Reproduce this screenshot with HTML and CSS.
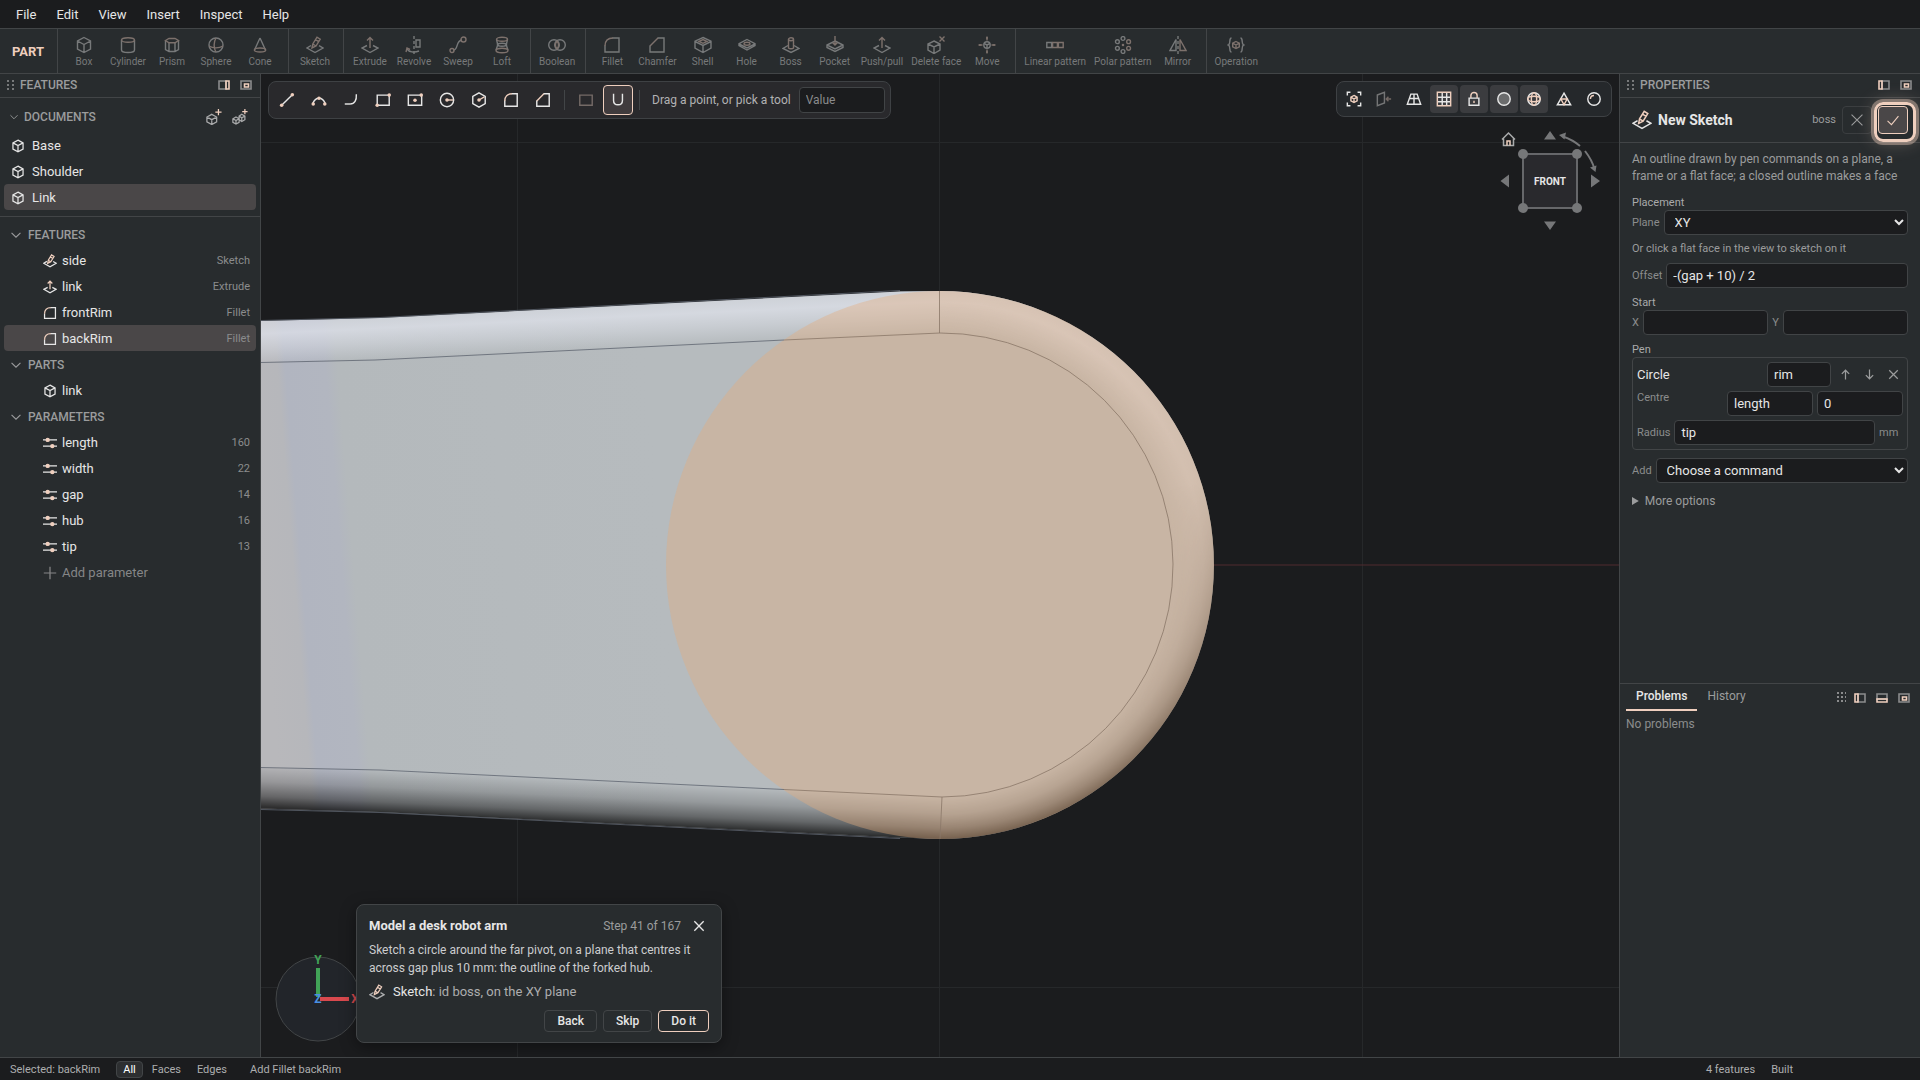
FILE: index.html
```html
<!DOCTYPE html>
<html lang="en">
<head>
<meta charset="utf-8">
<title>Model a desk robot arm</title>
<link rel="stylesheet" href="styles.css">
</head>
<body>
<svg class="defs" aria-hidden="true">
  <symbol id="box" viewBox="0 0 18 18"><path d="M9 1.5 15.5 5v8L9 16.5 2.5 13V5zM2.5 5 9 8.500 15.500 5M9 8.500v8"/></symbol>
  <symbol id="cylinder" viewBox="0 0 18 18"><path d="M2.500 4v10c0 1.400 3 2.500 6.500 2.500s6.500-1.100 6.500-2.500V4"/><ellipse class="a" cx="9" cy="4" rx="6.500" ry="2.300"/></symbol>
  <symbol id="prism" viewBox="0 0 18 18"><path d="M2.500 5v8.500l3.500 2h6l3.500-2V5M6 7v8M12 7v8"/><path class="a" d="M2.500 4.500 6 2.500h6l3.500 2L12 6.800H6z"/></symbol>
  <symbol id="sphere" viewBox="0 0 18 18"><circle cx="9" cy="9" r="7"/><path class="a" d="M9 2c-2.500 4-2.500 10 0 14M2 10c4 2.500 10 2.500 14 0"/></symbol>
  <symbol id="cone" viewBox="0 0 18 18"><path d="M9 2 3.500 14M9 2l5.500 12"/><ellipse class="a" cx="9" cy="14" rx="5.700" ry="2"/></symbol>
  <symbol id="sketch" viewBox="0 0 18 18"><path d="M5 9.500 1 12l8 4.500 8-4.500-4-2.300"/><path class="a" d="m6 12 .8-4L11 1.200l3.200 2L10 10zM6.800 8l3.200 2M9.500 3.700l3.200 2"/></symbol>
  <symbol id="extrude" viewBox="0 0 18 18"><path d="M6 9.500 1 12l8 4.500 8-4.500-5-2.500"/><path class="a" d="M9 12V1.500M6 4.500l3-3 3 3"/></symbol>
  <symbol id="revolve" viewBox="0 0 18 18"><path d="M9 0v18" stroke-dasharray="3 2"/><path d="M11 4h4v7h-4zM14 15c-5 2-10 1-12-2"/><path class="a" d="m1 16 1-4 3 1.500"/></symbol>
  <symbol id="sweep" viewBox="0 0 18 18"><path d="M4 14c6 0 2-9 9-10"/><circle class="a" cx="3" cy="14.500" r="2"/><circle class="a" cx="14.500" cy="3.500" r="2.500"/></symbol>
  <symbol id="loft" viewBox="0 0 18 18"><path d="M3.500 3.500C5 9 5 9 3 14M14.500 3.500C13 9 13 9 15 14"/><ellipse class="a" cx="9" cy="3.200" rx="5.500" ry="2"/><ellipse class="a" cx="9" cy="14.500" rx="6" ry="2.300"/><ellipse cx="9" cy="8.800" rx="4.200" ry="1.500"/></symbol>
  <symbol id="boolean" viewBox="0 0 18 18"><circle cx="6" cy="9" r="5.300"/><circle cx="12" cy="9" r="5.300"/><path class="a" d="M9 5c-2 2.500-2 5.500 0 8 2-2.500 2-5.500 0-8z"/></symbol>
  <symbol id="fillet" viewBox="0 0 18 18"><path d="M9.500 2H16v14H2V9.500"/><path class="a" d="M2 10c0-5 3-8 8-8"/></symbol>
  <symbol id="chamfer" viewBox="0 0 18 18"><path d="M9.500 2H16v14H2V9.500"/><path class="a" d="m2 10 8-8"/></symbol>
  <symbol id="shell" viewBox="0 0 18 18"><path d="m9 1.500 8 3.700v7L9 16.500l-8-4.300v-7zM1 5.500 9 9.500l8-4M9 9.500v7"/><path class="a" d="m5 5.500 4-2 4 2-4 1.800z"/></symbol>
  <symbol id="hole" viewBox="0 0 18 18"><path d="m9 3.500 8 4.200v2L9 14 1 9.700v-2zM1 8l8 4 8-4"/><ellipse class="a" cx="9" cy="7.700" rx="3" ry="1.500"/></symbol>
  <symbol id="boss" viewBox="0 0 18 18"><path d="m6 9.500-5 3L9 16.500l8-4-5-3"/><path class="a" d="M6.500 3.500V12c1 1 4 1 5 0V3.500"/><ellipse class="a" cx="9" cy="3.300" rx="2.500" ry="1.500"/></symbol>
  <symbol id="pocket" viewBox="0 0 18 18"><path d="m9 5 8 4v2.500l-8 4-8-4V9zM1 9l8 4 8-4"/><path class="a" d="M9 0v9M6.500 6.500 9 9l2.500-2.500"/></symbol>
  <symbol id="delface" viewBox="0 0 18 18"><path d="m7 5 6 3v6l-6 3.500-6-3.500V8zM1 8l6 3 6-3M7 11v6.500"/><path class="a" d="m12.500.5 5 5M17.500.5l-5 5"/></symbol>
  <symbol id="move" viewBox="0 0 18 18"><circle cx="9" cy="9" r="3.200"/><path d="M6 7.500 9 9l3-1.500M9 9v3.200"/><path class="a" d="M9 .5v4M9 13.500v4M.5 9h4M13.500 9h4M8 2h2M8 16h2M2 8v2M16 8v2"/></symbol>
  <symbol id="linear" viewBox="0 0 18 18"><path d="M.8 6.500h4.800v5H.8z"/><path class="a" d="M6.600 6.500h4.800v5H6.600zM12.400 6.500h4.800v5h-4.800z"/></symbol>
  <symbol id="polar" viewBox="0 0 18 18"><circle class="a" cx="9" cy="9" r=".6"/><circle cx="9" cy="2.500" r="1.900"/><circle class="a" cx="14.600" cy="5.700" r="1.900"/><circle class="a" cx="14.600" cy="12.300" r="1.900"/><circle cx="9" cy="15.500" r="1.900"/><circle cx="3.400" cy="12.300" r="1.900"/><circle cx="3.400" cy="5.700" r="1.900"/></symbol>
  <symbol id="mirror" viewBox="0 0 18 18"><path d="M9 0v18" stroke-dasharray="3 2"/><path d="M7 3.500v11H1z"/><path class="a" d="M11 3.500v11h6z"/></symbol>
  <symbol id="operation" viewBox="0 0 18 18"><path d="M4.500 2C1.500 2 4 8 1.500 9 4 10 1.500 16 4.500 16M13.500 2c3 0 .5 6 3 7-2.500 1 0 7-3 7"/><path class="a" d="m9 5.500 3.300 1.700v3.600L9 12.500l-3.300-1.700V7.200zM5.700 7.200 9 9l3.300-1.800M9 9v3.500"/></symbol>

  <symbol id="line" viewBox="0 0 18 18"><path d="M3 15 15 3"/><circle class="f" cx="3" cy="15" r="2"/><circle class="f" cx="15" cy="3" r="2"/></symbol>
  <symbol id="arc" viewBox="0 0 18 18"><path d="M2 13c3-8 11-8 14 0"/><circle class="f" cx="2.500" cy="13.500" r="2"/><circle class="f" cx="15.500" cy="13.500" r="2"/><circle class="f" cx="9" cy="7" r="2"/></symbol>
  <symbol id="tangent" viewBox="0 0 18 18"><path d="M2 13.500h6"/><path d="M8 13.500c5 0 7.500-4 7-11"/></symbol>
  <symbol id="rect" viewBox="0 0 18 18"><path d="M2.500 3.500h13.500v11.500h-13.500z"/><circle class="f" cx="2.500" cy="15" r="2"/><circle class="f" cx="16" cy="3.500" r="2"/></symbol>
  <symbol id="crect" viewBox="0 0 18 18"><path d="M1.500 3.500h15v11.500h-15z"/><circle class="f" cx="9" cy="9.200" r="2"/><circle class="f" cx="16" cy="3.500" r="2"/></symbol>
  <symbol id="circ" viewBox="0 0 18 18"><circle cx="9" cy="9" r="7.500"/><circle class="f" cx="9" cy="9" r="2"/><path class="a" d="M9 9h7"/></symbol>
  <symbol id="hex" viewBox="0 0 18 18"><path d="m9 1 7 4v8l-7 4-7-4V5z"/><circle class="f" cx="9" cy="9" r="2"/><path class="a" d="m9 9 6-3.500"/></symbol>
  <symbol id="cons" viewBox="0 0 18 18"><path class="a" d="M2 3.500h14v11.500h-14z"/></symbol>
  <symbol id="magnet" viewBox="0 0 18 18"><path d="M4 2v7.500c0 6.500 10 6.500 10 0V2"/></symbol>

  <symbol id="fit" viewBox="0 0 18 18"><path d="M1.500 5V1.500H5M13 1.500h3.500V5M16.500 13v3.500H13M5 16.500H1.500V13"/><path class="a" d="m9 5 3.500 2v4L9 13l-3.500-2V7zM5.500 7 9 9l3.500-2M9 9v4"/></symbol>
  <symbol id="section" viewBox="0 0 18 18"><path d="m1.500 4.500 8-3v12l-8 3z"/><path class="a" d="M17 9h-5M14 6.500 11.500 9l2.500 2.500"/></symbol>
  <symbol id="persp" viewBox="0 0 18 18"><path d="M5.500 3.500h7l4 11.500h-15zM4 8.500h10M9 3.500V15"/></symbol>
  <symbol id="grid" viewBox="0 0 18 18"><path d="M2 7h14M2 12h14M7 2v14M12 2v14"/><path class="a" d="M1.500 1.500h15v15h-15z"/></symbol>
  <symbol id="lock" viewBox="0 0 18 18"><path d="M3.500 8h11v8h-11z"/><path class="a" d="M5.500 8V5c0-4.500 7-4.500 7 0v3M9 11v2.500"/></symbol>
  <symbol id="shade" viewBox="0 0 18 18"><circle class="dim" cx="9" cy="9" r="7"/></symbol>
  <symbol id="wire" viewBox="0 0 18 18"><circle cx="9" cy="9" r="7"/><g class="a"><ellipse cx="9" cy="9" rx="3" ry="7"/><ellipse cx="9" cy="9" rx="7" ry="3"/></g></symbol>
  <symbol id="mesh" viewBox="0 0 18 18"><path d="m9 2.500 7.500 13h-15z"/><path class="a" d="M5.500 9h7L9 15.500z"/></symbol>
  <symbol id="matte" viewBox="0 0 18 18"><circle cx="9" cy="9" r="7"/><path class="a" d="M5 9c0-2.500 1.500-4 4-4"/></symbol>

  <symbol id="sliders" viewBox="0 0 18 18"><path d="M0 5h18M0 13h18"/><circle class="f" cx="6" cy="5" r="2.800"/><circle class="f" cx="12" cy="13" r="2.800"/></symbol>
  <symbol id="plus" viewBox="0 0 18 18"><path d="M9 1v16M1 9h16"/></symbol>
  <symbol id="chev" viewBox="0 0 18 18"><path d="m1 5 8 8 8-8"/></symbol>
  <symbol id="x" viewBox="0 0 18 18"><path d="m2 2 14 14M16 2 2 16"/></symbol>
  <symbol id="check" viewBox="0 0 18 18"><path d="m2 10 5 5L16 4"/></symbol>
  <symbol id="up" viewBox="0 0 18 18"><path d="M9 17V2M3 8l6-6 6 6"/></symbol>
  <symbol id="down" viewBox="0 0 18 18"><path d="M9 1v15M3 10l6 6 6-6"/></symbol>
  <symbol id="newpart" viewBox="0 0 18 18"><path d="m6.500 6 5.500 3v5.500l-5.500 3-5.500-3V9zM1 9l5.500 3L12 9M6.500 12v5.500"/><path class="a" d="M14 0v7M10.500 3.500h7"/></symbol>
  <symbol id="newasm" viewBox="0 0 18 18"><path d="m4.500 9 3.500 2v4l-3.500 2L1 15v-4zM1 11l3.500 2L8 11M4.500 13v4M11 6l3.500 2v4L11 14l-3-2V8zM8 8l3 2 3.500-2M11 10v4"/><path class="a" d="M14.500 0v6M11.500 3h6"/></symbol>
  <symbol id="dockr" viewBox="0 0 12 10"><path d="M1 1h7v8H1z"/><path class="a" d="M8 1h3v8H8z"/></symbol>
  <symbol id="dockl" viewBox="0 0 12 10"><path d="M4 1h7v8H4z"/><path class="a" d="M1 1h3v8H1z"/></symbol>
  <symbol id="dockb" viewBox="0 0 12 10"><path d="M1 1h10v5H1z"/><path class="a" d="M1 6h10v3H1z"/></symbol>
  <symbol id="float" viewBox="0 0 12 10"><path d="M1 1h10v8H1z"/><path class="a" d="M4.500 4h4v3h-4z"/></symbol>
  <symbol id="grip" viewBox="0 0 8 12"><path class="g" d="M0 1h2v2H0zM5 1h2v2H5zM0 5h2v2H0zM5 5h2v2H5zM0 9h2v2H0zM5 9h2v2H5z"/></symbol>
</svg>

<header>
  <nav class="menubar">
    <button>File</button><button>Edit</button><button>View</button><button>Insert</button><button>Inspect</button><button>Help</button>
  </nav>
  <div class="ribbon">
    <strong class="mode">PART</strong>
    <div class="group">
      <button disabled><svg><use href="#box"/></svg>Box</button>
      <button disabled><svg><use href="#cylinder"/></svg>Cylinder</button>
      <button disabled><svg><use href="#prism"/></svg>Prism</button>
      <button disabled><svg><use href="#sphere"/></svg>Sphere</button>
      <button disabled><svg><use href="#cone"/></svg>Cone</button>
    </div>
    <div class="group"><button disabled><svg><use href="#sketch"/></svg>Sketch</button></div>
    <div class="group">
      <button disabled><svg><use href="#extrude"/></svg>Extrude</button>
      <button disabled><svg><use href="#revolve"/></svg>Revolve</button>
      <button disabled><svg><use href="#sweep"/></svg>Sweep</button>
      <button disabled><svg><use href="#loft"/></svg>Loft</button>
    </div>
    <div class="group"><button disabled><svg><use href="#boolean"/></svg>Boolean</button></div>
    <div class="group">
      <button disabled><svg><use href="#fillet"/></svg>Fillet</button>
      <button disabled><svg><use href="#chamfer"/></svg>Chamfer</button>
      <button disabled><svg><use href="#shell"/></svg>Shell</button>
      <button disabled><svg><use href="#hole"/></svg>Hole</button>
      <button disabled><svg><use href="#boss"/></svg>Boss</button>
      <button disabled><svg><use href="#pocket"/></svg>Pocket</button>
      <button disabled><svg><use href="#extrude"/></svg>Push/pull</button>
      <button disabled><svg><use href="#delface"/></svg>Delete face</button>
      <button disabled><svg><use href="#move"/></svg>Move</button>
    </div>
    <div class="group">
      <button disabled><svg><use href="#linear"/></svg>Linear pattern</button>
      <button disabled><svg><use href="#polar"/></svg>Polar pattern</button>
      <button disabled><svg><use href="#mirror"/></svg>Mirror</button>
    </div>
    <div class="group"><button disabled><svg><use href="#operation"/></svg>Operation</button></div>
  </div>
</header>

<main>
  <aside class="panel left">
    <div class="panel-head"><svg class="grip"><use href="#grip"/></svg><h2>Features</h2>
      <button aria-label="Dock right"><svg class="dock"><use href="#dockr"/></svg></button><button aria-label="Float"><svg class="dock"><use href="#float"/></svg></button></div>
    <section class="docs">
      <div class="sec first"><svg><use href="#chev"/></svg><h3>Documents</h3>
        <button aria-label="New part"><svg><use href="#newpart"/></svg></button><button aria-label="New assembly"><svg><use href="#newasm"/></svg></button></div>
      <ul>
        <li><svg><use href="#box"/></svg>Base</li>
        <li><svg><use href="#box"/></svg>Shoulder</li>
        <li class="on"><svg><use href="#box"/></svg>Link</li>
      </ul>
    </section>
    <section class="tree">
      <div class="sec"><svg><use href="#chev"/></svg><h3>Features</h3></div>
      <ul>
        <li><svg><use href="#sketch"/></svg>side<small>Sketch</small></li>
        <li><svg><use href="#extrude"/></svg>link<small>Extrude</small></li>
        <li><svg><use href="#fillet"/></svg>frontRim<small>Fillet</small></li>
        <li class="on"><svg><use href="#fillet"/></svg>backRim<small>Fillet</small></li>
      </ul>
      <div class="sec"><svg><use href="#chev"/></svg><h3>Parts</h3></div>
      <ul><li><svg><use href="#box"/></svg>link</li></ul>
      <div class="sec"><svg><use href="#chev"/></svg><h3>Parameters</h3></div>
      <ul>
        <li><svg><use href="#sliders"/></svg>length<small>160</small></li>
        <li><svg><use href="#sliders"/></svg>width<small>22</small></li>
        <li><svg><use href="#sliders"/></svg>gap<small>14</small></li>
        <li><svg><use href="#sliders"/></svg>hub<small>16</small></li>
        <li><svg><use href="#sliders"/></svg>tip<small>13</small></li>
        <li class="add"><svg><use href="#plus"/></svg>Add parameter</li>
      </ul>
    </section>
  </aside>

  <div class="view">
    <svg class="scene" viewBox="261 74 1358 983" preserveAspectRatio="xMidYMid slice">
      <defs>
        <linearGradient id="face" gradientUnits="userSpaceOnUse" x1="261" y1="565" x2="661" y2="533">
          <stop offset="0" stop-color="#b8b8bb"/><stop offset=".08" stop-color="#b6b7bb"/><stop offset=".1" stop-color="#b1b5c0"/><stop offset=".2" stop-color="#b2b6c0"/><stop offset=".23" stop-color="#b4b9bc"/><stop offset="1" stop-color="#b6bbbe"/>
        </linearGradient>
        <linearGradient id="topA" gradientUnits="userSpaceOnUse" x1="500" y1="354" x2="498" y2="312">
          <stop offset="0" stop-color="#e2e5ee" stop-opacity="0"/><stop offset=".4" stop-color="#e2e5ee" stop-opacity=".4"/><stop offset=".75" stop-color="#e2e5ee" stop-opacity=".7"/><stop offset="1" stop-color="#e2e5ee" stop-opacity=".55"/>
        </linearGradient>
        <linearGradient id="botA" gradientUnits="userSpaceOnUse" x1="500" y1="775.500" x2="498" y2="818">
          <stop offset="0" stop-opacity="0"/><stop offset=".4" stop-opacity=".18"/><stop offset=".75" stop-opacity=".45"/><stop offset="1" stop-opacity=".75"/>
        </linearGradient>
        <radialGradient id="ringL" gradientUnits="userSpaceOnUse" cx="940" cy="565" r="274">
          <stop offset=".847" stop-color="#e2e5ee" stop-opacity="0"/><stop offset=".91" stop-color="#e2e5ee" stop-opacity=".4"/><stop offset=".96" stop-color="#e2e5ee" stop-opacity=".7"/><stop offset="1" stop-color="#e2e5ee" stop-opacity=".55"/>
        </radialGradient>
        <radialGradient id="ringD" gradientUnits="userSpaceOnUse" cx="940" cy="565" r="274">
          <stop offset=".847" stop-opacity="0"/><stop offset=".91" stop-opacity=".18"/><stop offset=".96" stop-opacity=".45"/><stop offset="1" stop-opacity=".75"/>
        </radialGradient>
        <linearGradient id="fadeL" x1="0" x2="0" y1="0" y2="1"><stop offset="0" stop-color="#fff"/><stop offset=".5" stop-color="#666"/><stop offset=".8" stop-color="#000"/></linearGradient>
        <linearGradient id="fadeD" x1="0" x2="0" y1="0" y2="1"><stop offset=".35" stop-color="#000"/><stop offset=".5" stop-color="#3a3a3a"/><stop offset="1" stop-color="#fff"/></linearGradient>
        <mask id="mL"><path fill="url(#fadeL)" d="M940 291h276v550H940z"/></mask>
        <mask id="mD"><path fill="url(#fadeD)" d="M940 291h276v550H940z"/></mask>
      </defs>
      <path class="gridline" d="M517.500 74v983M939.500 74v983M1362.500 74v983M261 142.500h1358M261 987.500h1358"/>
      <path class="xaxis" d="M1213 565h406"/>
      <path fill="url(#face)" d="M261 321l119-3 520-26.500 40-.5a274 274 0 0 1 0 548l-40-1.500L380 812l-119-3.500z"/>
      <path fill="url(#topA)" d="M261 321l119-3 520-26.500 40-.5v42L375 360l-114 2.500z"/>
      <path fill="url(#botA)" d="M261 767.500l119 2.500 560 27v42l-40-1.500L380 812l-119-3.500z"/>
      <path mask="url(#mL)" fill="url(#ringL)" d="M940 291a274 274 0 0 1 0 548z"/>
      <path mask="url(#mD)" fill="url(#ringD)" d="M940 291a274 274 0 0 1 0 548z"/>
      <circle class="sketch-fill" cx="940" cy="565" r="274"/>
      <path class="edge" d="M261 362.500l114-2.500 409-20M261 767.500l119 2.500 404 19.500M261 320.500l119-3 520-27M261 809.500l119 3 520 26"/>
      <path class="edge warm" d="M784 340l156-7a232 232 0 0 1 2 464l-158-7.500M939.500 291v42M942 797l-2 42"/>
    </svg>

    <div class="bar tools">
      <button aria-label="Line"><svg><use href="#line"/></svg></button>
      <button aria-label="Arc"><svg><use href="#arc"/></svg></button>
      <button aria-label="Tangent arc"><svg><use href="#tangent"/></svg></button>
      <button aria-label="Rectangle"><svg><use href="#rect"/></svg></button>
      <button aria-label="Centre rectangle"><svg><use href="#crect"/></svg></button>
      <button aria-label="Circle"><svg><use href="#circ"/></svg></button>
      <button aria-label="Polygon"><svg><use href="#hex"/></svg></button>
      <button aria-label="Fillet"><svg><use href="#fillet"/></svg></button>
      <button aria-label="Chamfer"><svg><use href="#chamfer"/></svg></button>
      <i></i>
      <button disabled aria-label="Construction"><svg><use href="#cons"/></svg></button>
      <button class="on" aria-label="Snap"><svg><use href="#magnet"/></svg></button>
      <i></i>
      <label for="val">Drag a point, or pick a tool</label>
      <input id="val" placeholder="Value">
    </div>

    <div class="bar display">
      <button aria-label="Fit"><svg><use href="#fit"/></svg></button>
      <button disabled aria-label="Section"><svg><use href="#section"/></svg></button>
      <button aria-label="Perspective"><svg><use href="#persp"/></svg></button>
      <button class="on" aria-label="Grid"><svg><use href="#grid"/></svg></button>
      <button class="on" aria-label="Lock"><svg><use href="#lock"/></svg></button>
      <button class="on" aria-label="Shaded"><svg><use href="#shade"/></svg></button>
      <button class="on" aria-label="Edges"><svg><use href="#wire"/></svg></button>
      <button aria-label="Mesh"><svg><use href="#mesh"/></svg></button>
      <button aria-label="Material"><svg><use href="#matte"/></svg></button>
    </div>

    <svg class="cube" viewBox="0 0 104 104">
      <path class="home" d="M3 15.500 9.500 9l6.500 6.500M4.500 14v7.500h10V14"/><path class="home door" d="M8 21.500V17h3v4.500"/>
      <path class="tri" d="M51 7l6 8.500H45zM51 106l-6-8.500h12zM1.500 57l8.500-6.500v13zM101 57l-9-6.500v13z"/>
      <path class="body" d="M24 30h54v54H24z"/>
      <g class="tri"><circle cx="24" cy="30" r="5"/><circle cx="78" cy="30" r="5"/><circle cx="24" cy="84" r="5"/><circle cx="78" cy="84" r="5"/></g>
      <path class="turn" d="M81 22Q74 16 64 12.500M86 27q7 9 9.500 18"/><path class="tri" d="m60 11 7-2.500-1.500 7zM96.500 48l-5.500-4.500 6.500-2z"/>
      <text x="51" y="61">FRONT</text>
    </svg>

    <svg class="axes" viewBox="0 0 90 90">
      <circle cx="45" cy="47" r="42"/>
      <path stroke="#d9494e" d="M47 47h29"/><path stroke="#41a357" d="M45 45V16"/>
      <text x="45" y="12" fill="#41a357">Y</text><text x="82" y="51" fill="#d9494e">X</text><text x="45" y="51" fill="#4a90e2">Z</text>
    </svg>

    <article class="tour">
      <div class="tour-head"><h1>Model a desk robot arm</h1><span>Step 41 of 167</span><button aria-label="Close"><svg><use href="#x"/></svg></button></div>
      <p>Sketch a circle around the far pivot, on a plane that centres it across gap plus 10 mm: the outline of the forked hub.</p>
      <div class="action"><svg><use href="#sketch"/></svg><span><b>Sketch</b>: id boss, on the XY plane</span></div>
      <div class="tour-foot"><button>Back</button><button>Skip</button><button class="go">Do it</button></div>
    </article>
  </div>

  <aside class="panel right">
    <div class="props">
      <div class="panel-head"><svg class="grip"><use href="#grip"/></svg><h2>Properties</h2>
        <button aria-label="Dock left"><svg class="dock"><use href="#dockl"/></svg></button><button aria-label="Float"><svg class="dock"><use href="#float"/></svg></button></div>
      <div class="title"><svg><use href="#sketch"/></svg><h2>New Sketch</h2><span>boss</span>
        <button aria-label="Cancel"><svg><use href="#x"/></svg></button>
        <button class="ok" aria-label="Apply"><svg><use href="#check"/></svg></button></div>
      <form>
        <p>An outline drawn by pen commands on a plane, a frame or a flat face; a closed outline makes a face</p>
        <div class="legend">Placement</div>
        <div class="field"><label for="plane">Plane</label><select id="plane"><option>XY</option></select></div>
        <div class="hint">Or click a flat face in the view to sketch on it</div>
        <div class="field"><label for="offset">Offset</label><input id="offset" value="-(gap + 10) / 2"></div>
        <div class="legend gap">Start</div>
        <div class="field"><label for="sx">X</label><input id="sx"><label for="sy" class="y">Y</label><input id="sy"></div>
        <div class="legend gap">Pen</div>
        <div class="pen">
          <div class="pen-row"><label for="rim">Circle</label><input id="rim" value="rim">
            <button type="button" aria-label="Move up"><svg><use href="#up"/></svg></button><button type="button" aria-label="Move down"><svg><use href="#down"/></svg></button><button type="button" aria-label="Remove"><svg><use href="#x"/></svg></button></div>
          <div class="pen-row centre"><label for="cx">Centre</label><input id="cx" value="length"><input aria-label="Centre Y" value="0"></div>
          <div class="field"><label for="rad">Radius</label><input id="rad" value="tip"><span>mm</span></div>
        </div>
        <div class="field"><label for="add">Add</label><select id="add"><option>Choose a command</option></select></div>
        <details><summary>More options</summary></details>
      </form>
    </div>
    <div class="log">
      <div class="tabs"><button class="on">Problems</button><button>History</button>
        <span class="dots"></span><svg class="dock"><use href="#dockl"/></svg><svg class="dock"><use href="#dockb"/></svg><svg class="dock"><use href="#float"/></svg></div>
      <p>No problems</p>
    </div>
  </aside>
</main>

<footer>
  <span class="sel">Selected: backRim</span>
  <button class="on">All</button><button>Faces</button><button>Edges</button>
  <span class="msg">Add Fillet backRim</span>
  <span class="count">4 features</span><span>Built</span>
</footer>
</body>
</html>
```
FILE: styles.css
```css
:root {
  --bg: #1b1c1e;
  --panel: #282c2e;
  --line: #424547;
  --text: #e6e6e6;
  --muted: #9b9c9d;
  --accent: #efcfbe;
  --on: #4a4748;
}
* { box-sizing: border-box; }
body {
  margin: 0;
  min-height: 100vh;
  display: flex;
  flex-direction: column;
  background: var(--bg);
  color: var(--text);
  font: 13px/16px Roboto, "Liberation Sans", sans-serif;
}
h1, h2, h3, p, ul { margin: 0; padding: 0; font-size: inherit; list-style: none; }
button { margin: 0; padding: 0; border: 0; background: none; color: inherit; font: inherit; }
svg { width: 16px; height: 16px; flex: none; fill: none; stroke: currentColor; stroke-width: 1.400; display: block; }
.defs { position: absolute; width: 0; height: 0; }
.a { stroke: var(--accent); }
.f { fill: var(--accent); stroke: none; }
.g { fill: #77797a; stroke: none; }
.dim { fill: #6b6c6d; }

/* menu and ribbon */
.menubar { display: flex; height: 28px; padding: 2px 6px 0; }
.menubar button { padding: 0 10px; }
.ribbon { display: flex; height: 46px; border: 1px solid var(--line); border-width: 1px 0; background: var(--panel); }
.mode { width: 57px; padding-left: 12px; line-height: 45px; color: var(--accent); font-weight: 700; }
.group { display: flex; padding: 0 6px 0 4px; border-left: 1px solid var(--line); }
.group button {
  display: flex; flex-direction: column; align-items: center; justify-content: center;
  min-width: 44px; padding: 4px 4px 0; font-size: 10px; color: #77797a; --accent: #7d716c;
}
.group svg { width: 18px; height: 18px; }

main { flex: 1; display: flex; }
.panel { background: var(--panel); flex: none; }
.left { width: 261px; border-right: 1px solid var(--line); }
.right { width: 301px; border-left: 1px solid var(--line); display: flex; flex-direction: column; }
.panel-head { display: flex; align-items: center; height: 24px; padding: 0 8px 1px 7px; border-bottom: 1px solid var(--line); }
.panel-head h2, .sec h3 { flex: 1; font-size: 12px; font-weight: 500; text-transform: uppercase; color: var(--muted); }
.grip { width: 8px; height: 12px; margin-right: 5px; }
.dock { width: 12px; height: 10px; color: #8b8c8d; stroke-width: 1.600; }
.panel-head button + button { margin-left: 10px; }

.sec { display: flex; align-items: center; height: 26px; padding: 1px 12px 0 11px; gap: 7px; }
.sec > svg { width: 10px; height: 10px; color: var(--muted); stroke-width: 2; }
.sec.first { height: 34px; padding: 3px 12px 0 10px; gap: 6px; }
.sec.first > svg { width: 8px; height: 8px; }
.sec button { color: #a9aaab; margin-left: 4px; }
.docs { padding-bottom: 6px; border-bottom: 1px solid var(--line); }
.tree { padding-top: 4px; }
.panel li { display: flex; align-items: center; gap: 7px; height: 26px; margin: 0 4px; padding: 1px 6px 0 7px; border-radius: 4px; }
.panel li svg { width: 14px; height: 14px; stroke-width: 1.600; }
.tree li { padding-left: 39px; gap: 5px; }
.panel li.on { background: var(--on); }
.panel li small { margin-left: auto; font-size: 11px; color: #8b8c8d; }
.panel li.add { color: #858687; }

/* viewport */
.view { flex: 1; position: relative; overflow: hidden; min-width: 0; }
.scene { position: absolute; inset: 0; width: 100%; height: 100%; stroke: none; }
.gridline { stroke: #26282a; stroke-width: 1; }
.xaxis { stroke: #512a2e; stroke-width: 1; }
.sketch-fill { fill: rgba(228, 173, 125, .4); }
.edge { stroke: #5f6570; stroke-width: 1; stroke-opacity: .8; }
.edge.warm { stroke: #8a7768; }
.bar { position: absolute; top: 7px; display: flex; align-items: center; border: 1px solid #3e4144; border-radius: 8px; background: #29292c; }
.bar button { display: grid; place-items: center; border: 1px solid transparent; border-radius: 4px; }
.bar button:disabled { color: #747576; --accent: #746a66; }
.bar svg { stroke-width: 1.600; }
.tools { left: 7px; height: 38px; padding: 0 5px 0 3px; gap: 2px; }
.tools button { width: 30px; height: 30px; }
.tools i { width: 1px; height: 20px; margin: 0 4px; background: var(--line); }
.tools .on { border-color: var(--accent); background: #403b3d; }
.tools label { margin: 0 6px; font-size: 12px; color: #b1b2b3; }
.display { right: 7px; height: 36px; padding: 0 3px; gap: 2px; background: #25282b; }
.display button { width: 28px; height: 28px; }
.display .on { background: #3b3c3f; }

input, select {
  min-width: 0; height: 25px; padding: 0 6px; border: 1px solid #414446; border-radius: 4px;
  background: var(--bg); color: var(--text); font: inherit; outline: none;
}
.tools input { width: 86px; height: 26px; font-size: 12px; }
input::placeholder { color: #8a8b8c; }

.cube { position: absolute; right: 16px; top: 50px; width: 104px; height: 104px; overflow: visible; }
.home { stroke: #a9aaab; stroke-width: 1.500; }
.home.door { stroke: var(--accent); }
.tri { fill: #767779; stroke: none; }
.cube .body { fill: #29292d; stroke: #66676a; stroke-width: 2; }
.turn { stroke: #767779; stroke-width: 2; }
.cube text { fill: #e6e6e6; stroke: none; font-size: 10px; font-weight: 700; text-anchor: middle; }
.axes { position: absolute; left: 12px; bottom: 15px; width: 90px; height: 90px; stroke-width: 4; }
.axes circle { fill: #22252a; stroke: var(--line); stroke-width: 1; }
.axes text { stroke: none; font-size: 12px; font-weight: 700; text-anchor: middle; }

.tour {
  position: absolute; left: 95px; bottom: 14px; width: 366px; padding: 10px 12px;
  border: 1px solid var(--line); border-radius: 8px; background: var(--panel); box-shadow: 0 4px 16px rgba(0, 0, 0, .4);
}
.tour-head { display: flex; align-items: center; height: 22px; }
.tour-head h1 { flex: 1; font-weight: 700; }
.tour-head span { font-size: 12px; color: var(--muted); }
.tour-head button { margin: 0 4px 0 12px; }
.tour-head svg { width: 12px; height: 12px; stroke-width: 2; }
.tour p { margin-top: 4px; font-size: 12px; line-height: 18px; color: #cccdce; }
.action { display: flex; align-items: center; gap: 8px; margin: 7px 0 10px; color: #adaeaf; }
.action b { font-weight: 400; color: var(--text); }
.tour-foot { display: flex; justify-content: flex-end; gap: 6px; }
.tour-foot button { height: 22px; padding: 0 12px; border: 1px solid var(--line); border-radius: 4px; font-size: 12px; font-weight: 500; }
.tour-foot .go { border-color: var(--accent); }

/* properties */
.props { flex: 1; }
.title { display: flex; align-items: center; height: 45px; padding: 0 12px; border-bottom: 1px solid var(--line); }
.title > svg { width: 20px; height: 20px; margin-right: 6px; }
.title h2 { flex: 1; font-size: 14px; font-weight: 700; }
.title span { margin-right: 6px; font-size: 11px; color: var(--muted); }
.title button { display: grid; place-items: center; width: 30px; height: 28px; border: 1px solid #3b3e40; border-radius: 4px; color: var(--muted); }
.title button svg { width: 14px; height: 14px; }
.title .ok { position: relative; margin-left: 6px; background: var(--on); border-color: var(--accent); color: var(--accent); }
.ok::after {
  content: ""; position: absolute; inset: -5px -9px -9px -5px; border: 3px solid var(--accent); border-radius: 9px;
  box-shadow: 0 0 0 3px rgba(239, 207, 190, .4), 0 0 18px rgba(239, 207, 190, .3);
}
form { padding: 8px 12px; }
form p { font-size: 12px; line-height: 17px; color: var(--muted); }
.legend { margin-top: 11px; font-size: 11px; line-height: 14px; color: #a9aaab; }
.legend.gap { margin-top: 8px; }
.field { display: flex; align-items: center; gap: 4px; color: #8b8c8d; font-size: 11px; }
.field input, .field select { flex: 1; font-size: 13px; width: 0; }
.hint { margin: 6px 0; font-size: 11px; color: var(--muted); }
.pen { margin-bottom: 8px; padding: 4px; border: 1px solid var(--line); border-radius: 4px; display: grid; gap: 4px; }
.pen-row { display: flex; align-items: center; gap: 4px; }
.pen-row label { flex: 1; }
.pen-row input { width: 64px; }
.pen-row button { width: 20px; display: grid; place-items: center; color: var(--muted); }
.pen-row svg { width: 11px; height: 11px; stroke-width: 2; }
.centre { align-items: flex-start; }
.centre label { font-size: 11px; line-height: 13px; color: #8b8c8d; }
.centre input { width: 86px; }
.pen .field span { width: 24px; }
details { margin-top: 10px; font-size: 12px; color: var(--muted); }

.log { height: 374px; border-top: 1px solid var(--line); padding: 0 6px; color: #8b8c8d; font-size: 12px; }
.tabs { display: flex; align-items: center; gap: 10px; padding-right: 4px; }
.tabs button { height: 27px; padding: 0 10px 3px; color: var(--muted); }
.tabs button + button { margin-left: -10px; }
.tabs .on { border-bottom: 2px solid var(--accent); padding-bottom: 1px; color: var(--text); font-weight: 500; }
.dots { width: 10px; height: 13px; margin-left: auto; margin-right: -2px; background: radial-gradient(circle, #8b8c8d 1px, transparent 1px) 0 0 / 4px 4px; }
.log p { margin-top: 5px; }

footer { display: flex; align-items: center; height: 23px; padding: 1px 127px 0 10px; border-top: 1px solid var(--line); font-size: 11px; color: #adaeaf; }
footer button { height: 17px; padding: 0 7px; margin-right: 2px; border-radius: 4px; }
footer button.on { padding: 0 6px; border: 1px solid var(--line); background: #2d2f31; color: #fff; }
.sel { margin-right: 16px; }
.msg { margin-left: 14px; }
.count { margin-left: auto; margin-right: 16px; }
```
